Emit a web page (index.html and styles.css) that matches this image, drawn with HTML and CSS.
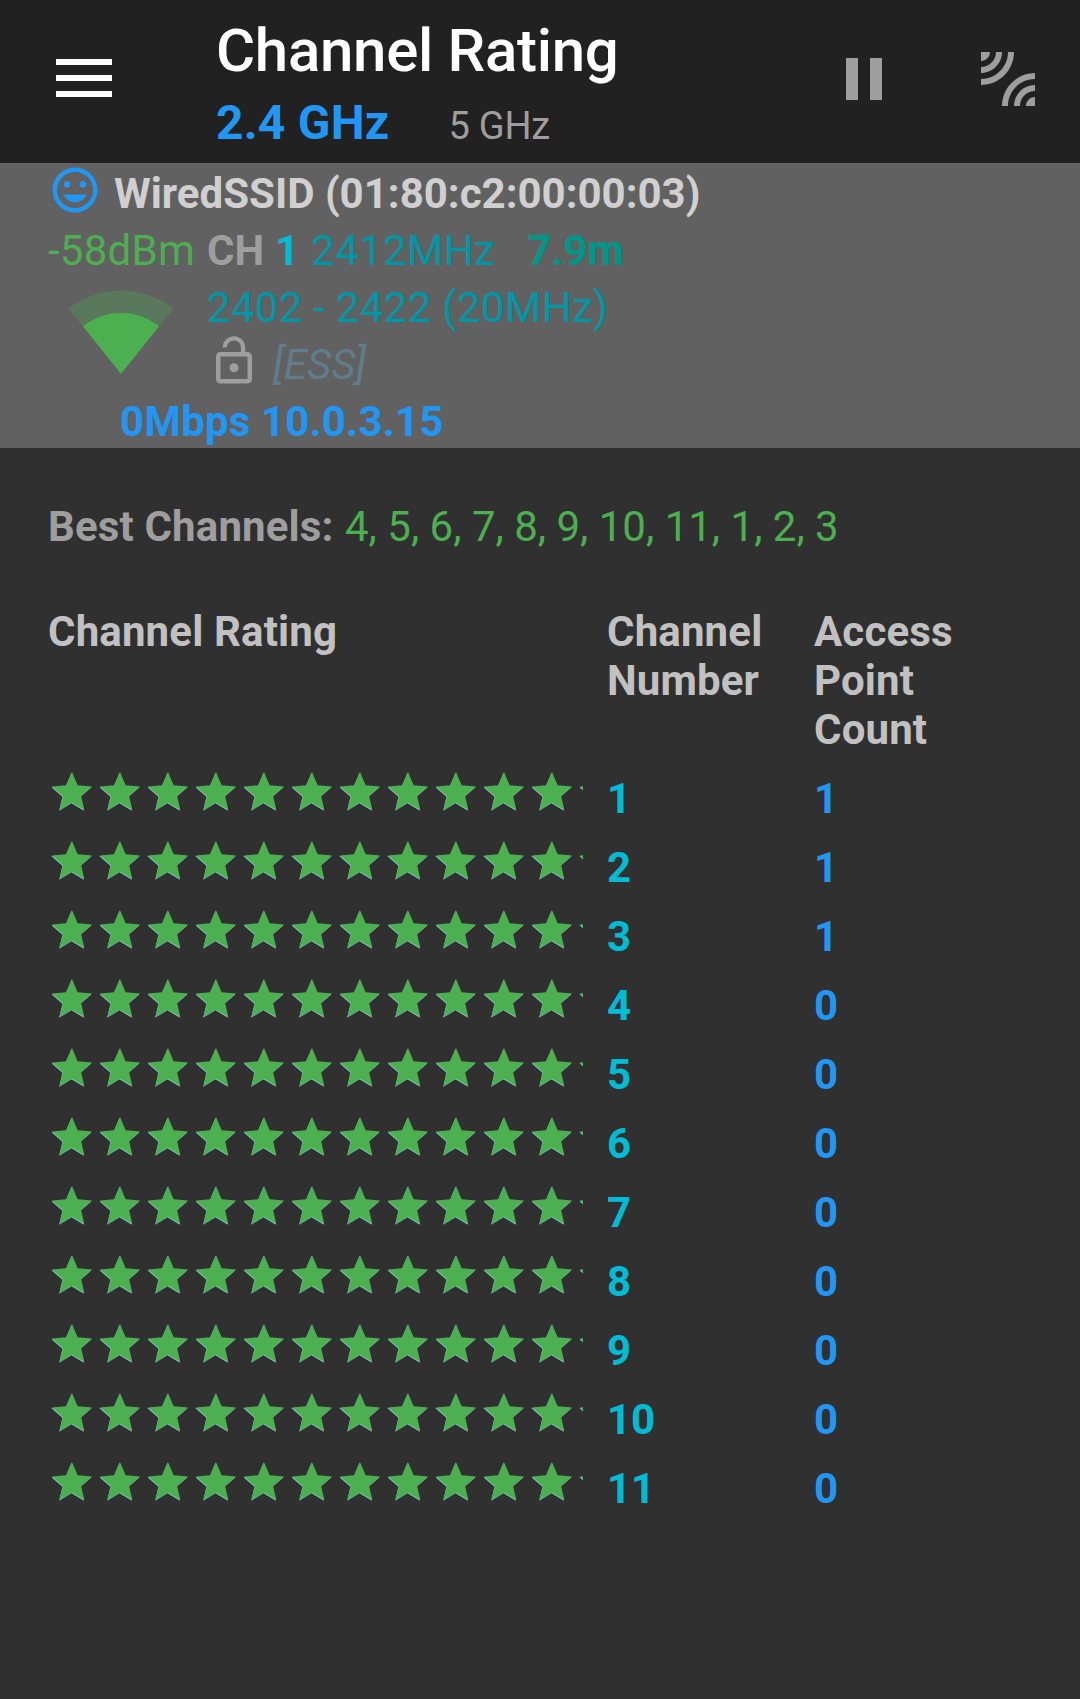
FILE: index.html
```
<!DOCTYPE html>
<html lang="en">
<head>
<meta charset="utf-8">
<title>Channel Rating</title>
<link rel="stylesheet" href="styles.css">
</head>
<body>
<svg width="0" height="0" class="defs" aria-hidden="true">
  <defs>
    <path id="star-shape" d="M12 17.27L18.18 21l-1.64-7.03L22 9.24l-7.19-.61L12 2 9.19 8.63 2 9.24l5.46 4.73L5.82 21z"/>
    <pattern id="stars" width="48" height="48" patternUnits="userSpaceOnUse">
      <use href="#star-shape" transform="translate(-.5 .7) scale(2)" fill="#80cbc4"/>
      <use href="#star-shape" transform="scale(2)" fill="#4caf50"/>
    </pattern>
  </defs>
</svg>

<header class="toolbar">
  <svg class="menu-icon" width="56" height="38" viewBox="0 0 56 38"><path fill="#fff" d="M0 0h56v6H0zM0 16h56v6H0zM0 32h56v6H0z"/></svg>
  <div class="titles">
    <h1 class="title">Channel Rating</h1>
    <div class="bands"><span class="band-active">2.4 GHz</span><span class="band">5 GHz</span></div>
  </div>
  <svg class="pause-icon" width="72" height="72" viewBox="0 0 24 24"><path fill="#9e9e9e" d="M6 19h4V5H6v14zm8-14v14h4V5h-4z"/></svg>
  <svg class="leak-icon" width="72" height="72" viewBox="0 0 24 24"><path fill="#9e9e9e" d="M6 3H3v3c1.66 0 3-1.34 3-3zm8 0h-2c0 4.97-4.03 9-9 9v2c6.08 0 11-4.93 11-11zm-4 0H8c0 2.76-2.24 5-5 5v2c3.87 0 7-3.13 7-7zm0 18h2c0-4.97 4.03-9 9-9v-2c-6.07 0-11 4.93-11 11zm8 0h3v-3c-1.66 0-3 1.34-3 3zm-4 0h2c0-2.76 2.24-5 5-5v-2c-3.87 0-7 3.13-7 7z"/></svg>
</header>

<section class="connection">
  <div class="line">
    <svg class="face-icon" width="54" height="54" viewBox="0 0 24 24"><path fill="#2196f3" d="M11.99 2C6.47 2 2 6.48 2 12s4.47 10 9.99 10C17.52 22 22 17.52 22 12S17.52 2 11.99 2zM12 20c-4.42 0-8-3.58-8-8s3.58-8 8-8 8 3.58 8 8-3.58 8-8 8zm3.5-9c.83 0 1.5-.67 1.5-1.5S16.33 8 15.5 8 14 8.67 14 9.5s.67 1.5 1.5 1.5zm-7 0c.83 0 1.5-.67 1.5-1.5S9.33 8 8.5 8 7 8.67 7 9.5 7.67 11 8.5 11zm3.5 6.5c2.33 0 4.31-1.46 5.11-3.5H6.89c.8 2.04 2.78 3.5 5.11 3.5z"/></svg>
    <span class="ssid">WiredSSID (01:80:c2:00:00:03)</span>
  </div>
  <div class="signal">
    <div class="signal-side">
      <div class="level">-58dBm</div>
      <svg class="wifi-icon" width="108" height="108" viewBox="0 0 24 24" fill="#4caf50"><path fill-opacity=".3" d="M12.01 21.49L23.64 7c-.45-.34-4.93-4-11.64-4C5.28 3 .81 6.66.36 7l11.63 14.49.01.01.01-.01z"/><path d="M3.53 10.95l8.46 10.54.01.01.01-.01 8.46-10.54C20.04 10.62 16.81 8 12 8c-4.81 0-8.04 2.62-8.47 2.95z"/></svg>
    </div>
    <div class="signal-main">
      <div class="line"><span class="ch">CH</span><span class="primary">1</span><span class="freq">2412MHz</span><span class="distance">7.9m</span></div>
      <div class="line freq-range">2402 - 2422 (20MHz)</div>
      <div class="line">
        <svg class="lock-icon" width="54" height="54" viewBox="0 0 24 24"><path fill="#9e9e9e" d="M12 17c1.1 0 2-.9 2-2s-.9-2-2-2-2 .9-2 2 .9 2 2 2zm6-9h-1V6c0-2.76-2.24-5-5-5S7 3.24 7 6h1.900c0-1.710 1.390-3.100 3.100-3.100s3.100 1.390 3.100 3.100v2H6c-1.100 0-2 .9-2 2v10c0 1.100.9 2 2 2h12c1.100 0 2-.9 2-2V10c0-1.100-.9-2-2-2zm0 12H6V10h12v10z"/></svg>
        <span class="caps">[ESS]</span>
      </div>
    </div>
  </div>
  <div class="line link">0Mbps 10.0.3.15</div>
</section>

<main class="content">
  <p class="best"><b class="best-label">Best Channels:</b> <span class="best-list">4, 5, 6, 7, 8, 9, 10, 11, 1, 2, 3</span></p>
  <div class="row head"><span>Channel Rating</span><span>Channel<br>Number</span><span>Access<br>Point<br>Count</span></div>
  <div class="row"><svg class="rating" width="535" height="48"><rect width="535" height="48" fill="url(#stars)"/></svg><span class="number">1</span><span class="count">1</span></div>
  <div class="row"><svg class="rating" width="535" height="48"><rect width="535" height="48" fill="url(#stars)"/></svg><span class="number">2</span><span class="count">1</span></div>
  <div class="row"><svg class="rating" width="535" height="48"><rect width="535" height="48" fill="url(#stars)"/></svg><span class="number">3</span><span class="count">1</span></div>
  <div class="row"><svg class="rating" width="535" height="48"><rect width="535" height="48" fill="url(#stars)"/></svg><span class="number">4</span><span class="count">0</span></div>
  <div class="row"><svg class="rating" width="535" height="48"><rect width="535" height="48" fill="url(#stars)"/></svg><span class="number">5</span><span class="count">0</span></div>
  <div class="row"><svg class="rating" width="535" height="48"><rect width="535" height="48" fill="url(#stars)"/></svg><span class="number">6</span><span class="count">0</span></div>
  <div class="row"><svg class="rating" width="535" height="48"><rect width="535" height="48" fill="url(#stars)"/></svg><span class="number">7</span><span class="count">0</span></div>
  <div class="row"><svg class="rating" width="535" height="48"><rect width="535" height="48" fill="url(#stars)"/></svg><span class="number">8</span><span class="count">0</span></div>
  <div class="row"><svg class="rating" width="535" height="48"><rect width="535" height="48" fill="url(#stars)"/></svg><span class="number">9</span><span class="count">0</span></div>
  <div class="row"><svg class="rating" width="535" height="48"><rect width="535" height="48" fill="url(#stars)"/></svg><span class="number">10</span><span class="count">0</span></div>
  <div class="row"><svg class="rating" width="535" height="48"><rect width="535" height="48" fill="url(#stars)"/></svg><span class="number">11</span><span class="count">0</span></div>
</main>
</body>
</html>
```
FILE: styles.css
```
* { box-sizing: border-box; }
body {
  margin: 0;
  min-height: 1699px;
  background: #303030;
  font-family: Roboto, sans-serif;
  font-size: 42px;
  line-height: 49px;
}
svg { display: block; flex: none; }
.defs { position: absolute; }

.toolbar {
  display: flex;
  align-items: flex-start;
  height: 163px;
  padding: 15px 36px 0 56px;
  background: #212121;
}
.menu-icon { margin-top: 44px; }
.titles { flex: 1; margin: 1px 0 0 104px; }
.title {
  margin: 0;
  font-size: 60px;
  font-weight: 500;
  line-height: 70px;
  letter-spacing: -.3px;
  color: #fff;
}
.bands {
  display: flex;
  align-items: baseline;
  gap: 59px;
  margin-top: 9px;
  line-height: 56px;
}
.band-active { font-size: 48px; font-weight: 700; letter-spacing: .2px; color: #2196f3; }
.band { font-size: 38px; letter-spacing: -.2px; color: #9e9e9e; }
.pause-icon { margin: 28px 72px 0 0; }
.leak-icon { margin-top: 28px; }

.connection {
  height: 285px;
  padding: 2px 48px 0;
  background: #616161;
  line-height: 57px;
}
.line { display: flex; height: 57px; white-space: pre; }
.face-icon { margin: -2px 12px 0 0; }
.ssid { font-weight: 700; color: #d0d0d0; }
.signal { display: flex; height: 171px; }
.signal-side { width: 159px; }
.level { height: 57px; letter-spacing: .25px; color: #4caf50; }
.wifi-icon { margin: -2px 0 0 19px; }
.signal-main { flex: 1; }
.ch { font-weight: 700; color: #9e9e9e; }
.primary { margin-left: 11px; font-weight: 700; color: #00bcd4; }
.freq { margin-left: 12px; letter-spacing: .3px; color: #0097a7; }
.distance { margin-left: 32px; font-weight: 700; color: #009688; }
.freq-range { letter-spacing: .3px; color: #0097a7; }
.lock-icon { margin: -2px 12px 0 0; }
.caps { font-style: italic; color: #607d8b; }
.link { padding-left: 72px; font-weight: 700; letter-spacing: .15px; color: #2196f3; }

.content { padding: 54px 48px 0; }
.best { margin: 0 0 56px; }
.best-label { margin-right: 1px; letter-spacing: .15px; color: #9e9e9e; }
.best-list { color: #4caf50; }
.row {
  display: grid;
  grid-template-columns: 559px 207px 1fr;
  height: 69px;
  padding-top: 9px;
  font-weight: 700;
}
.head { height: 158px; padding: 0; letter-spacing: .15px; color: #c1c1c1; }
.rating { margin-top: -6px; }
.number { color: #00bcd4; }
.count { color: #2196f3; }
```
